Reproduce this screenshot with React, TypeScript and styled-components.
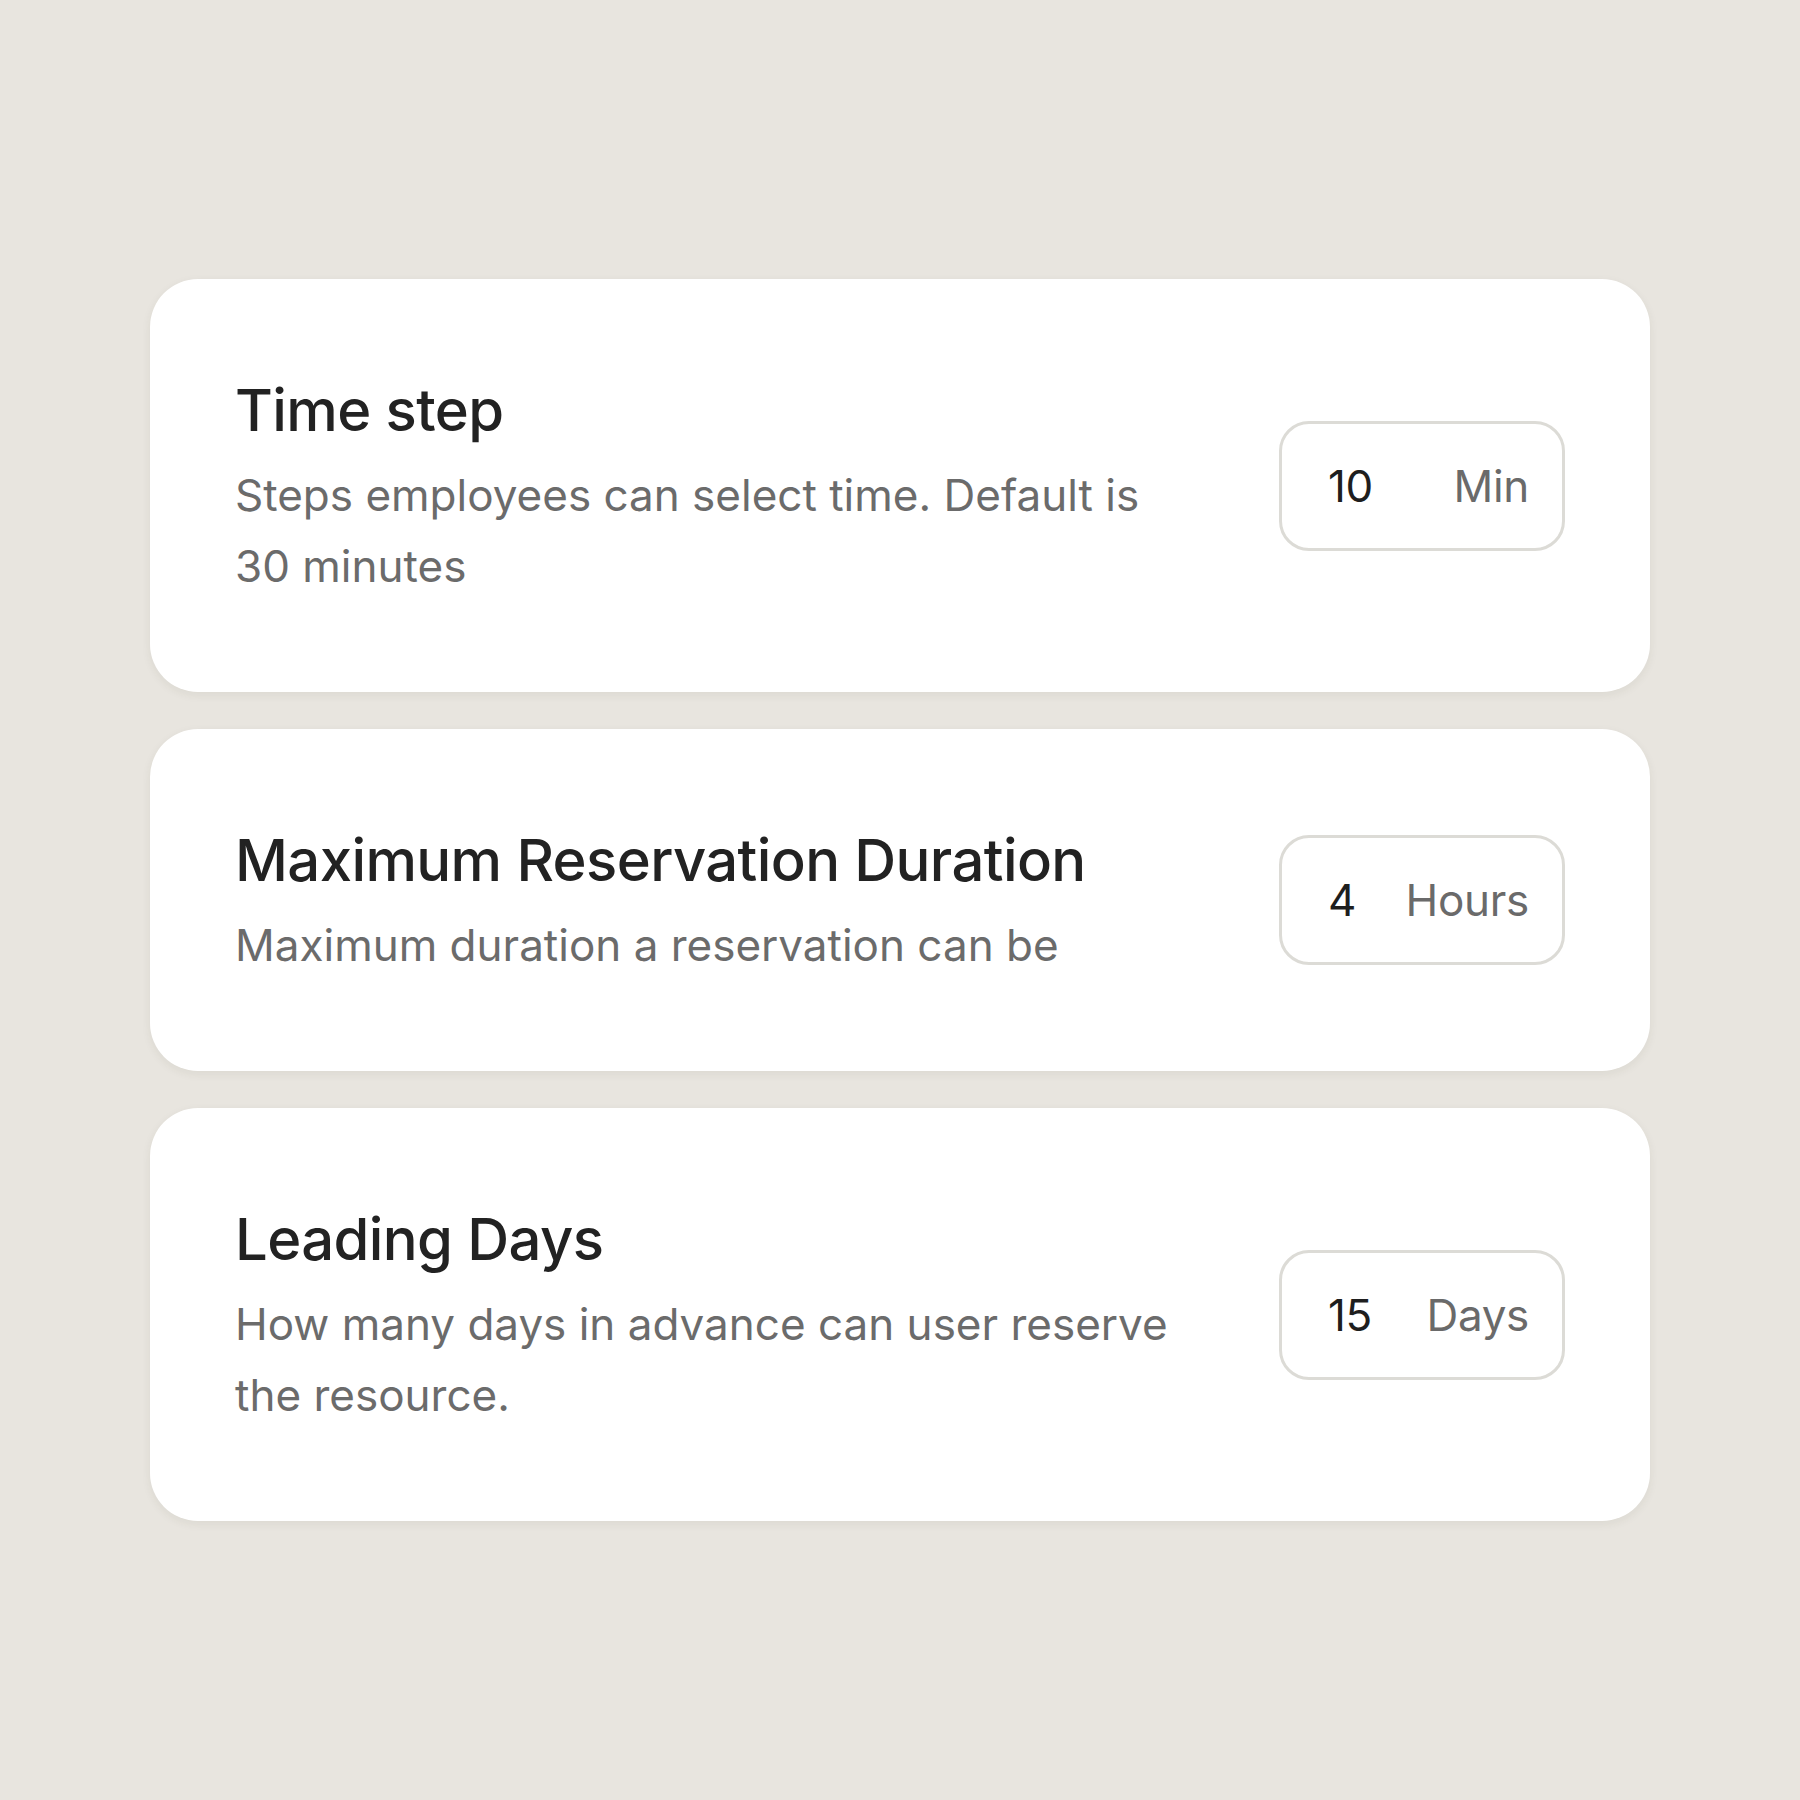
import React from "react";
import styled, { createGlobalStyle } from "styled-components";

const GlobalStyle = createGlobalStyle`
  html, body {
    margin: 0;
    padding: 0;
    background: #e8e5df;
  }
  body {
    font-family: Inter, "Noto Sans", "Liberation Sans", sans-serif;
  }
`;

const Page = styled.main`
  min-height: 1800px;
  box-sizing: border-box;
  padding: 279px 150px 0;
  background: #e8e5df;
`;

const List = styled.div`
  display: flex;
  flex-direction: column;
  gap: 37px;
  width: 1500px;
`;

const Card = styled.section`
  display: flex;
  align-items: center;
  justify-content: space-between;
  box-sizing: border-box;
  padding: 90px 85px;
  background: #ffffff;
  border-radius: 48px;
  box-shadow: 0 3px 10px rgba(60, 50, 30, 0.07);
`;

const TextBlock = styled.div`
  display: flex;
  flex-direction: column;
  gap: 9px;
  max-width: 945px;
`;

const Title = styled.h2`
  margin: 0;
  font-size: 58px;
  line-height: 82px;
  font-weight: 500;
  color: #222222;
  letter-spacing: -0.6px;
`;

const Description = styled.p`
  margin: 0;
  font-size: 44px;
  line-height: 71px;
  font-weight: 400;
  color: #6b6b6b;
  letter-spacing: 0;
`;

const ValueBox = styled.div`
  display: flex;
  align-items: center;
  justify-content: space-between;
  box-sizing: border-box;
  width: 286px;
  height: 130px;
  padding: 0 33px 0 46px;
  border: 3px solid #dcdbd6;
  border-radius: 30px;
  flex-shrink: 0;
  font-size: 44px;
  letter-spacing: -0.3px;
`;

const Amount = styled.span`
  color: #1e1e1e;
`;

const Unit = styled.span`
  color: #6a6a6a;
`;

type Setting = {
  title: string;
  description: string;
  value: string;
  unit: string;
};

const settings: Setting[] = [
  {
    title: "Time step",
    description: "Steps employees can select time. Default is 30 minutes",
    value: "10",
    unit: "Min",
  },
  {
    title: "Maximum Reservation Duration",
    description: "Maximum duration a reservation can be",
    value: "4",
    unit: "Hours",
  },
  {
    title: "Leading Days",
    description: "How many days in advance can user reserve the resource.",
    value: "15",
    unit: "Days",
  },
];

export default function App() {
  return (
    <>
      <GlobalStyle />
      <Page>
        <List>
          {settings.map((s) => (
            <Card key={s.title}>
              <TextBlock>
                <Title>{s.title}</Title>
                <Description>{s.description}</Description>
              </TextBlock>
              <ValueBox>
                <Amount>{s.value}</Amount>
                <Unit>{s.unit}</Unit>
              </ValueBox>
            </Card>
          ))}
        </List>
      </Page>
    </>
  );
}
